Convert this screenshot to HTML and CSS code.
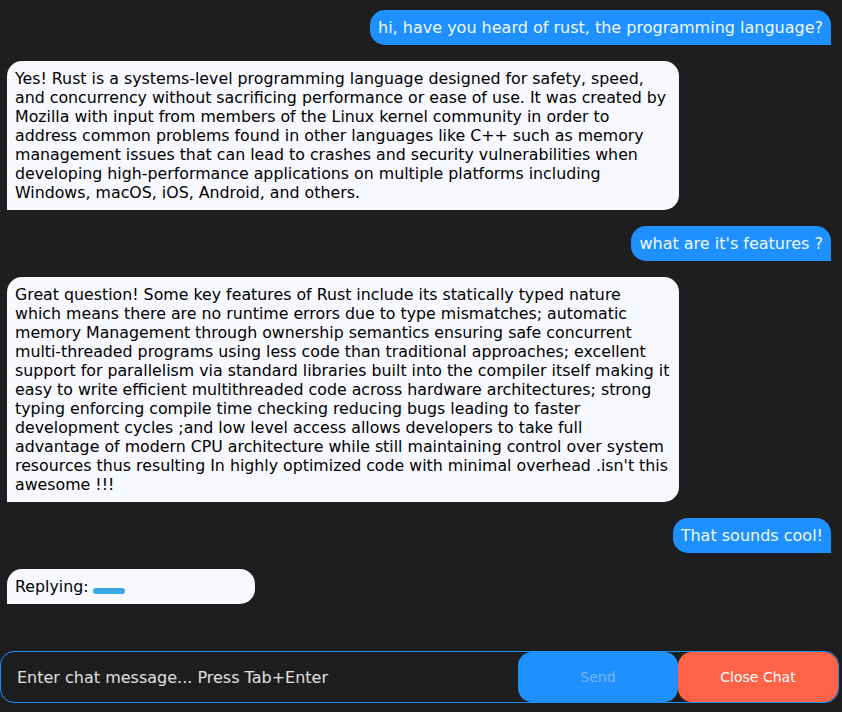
FILE: index.html
```html
<!DOCTYPE html>
<html lang="en">
<head>
  <meta charset="UTF-8">
  <meta name="viewport" content="width=device-width, initial-scale=1.0">
  <title>Chat</title>
  <link rel="stylesheet" href="styles.css">
</head>
<body>
  <div class="chat">
    <div class="message user">hi, have you heard of rust, the programming language?</div>
    <div class="message bot">Yes! Rust is a systems-level programming language designed for safety, speed, and concurrency without sacrificing performance or ease of use. It was created by Mozilla with input from members of the Linux kernel community in order to address common problems found in other languages like C++ such as memory management issues that can lead to crashes and security vulnerabilities when developing high-performance applications on multiple platforms including Windows, macOS, iOS, Android, and others.</div>
    <div class="message user">what are it's features ?</div>
    <div class="message bot">Great question! Some key features of Rust include its statically typed nature which means there are no runtime errors due to type mismatches; automatic memory Management through ownership semantics ensuring safe concurrent multi-threaded programs using less code than traditional approaches; excellent support for parallelism via standard libraries built into the compiler itself making it easy to write efficient multithreaded code across hardware architectures; strong typing enforcing compile time checking reducing bugs leading to faster development cycles ;and low level access allows developers to take full advantage of modern CPU architecture while still maintaining control over system resources thus resulting In highly optimized code with minimal overhead .isn't this awesome !!!</div>
    <div class="message user">That sounds cool!</div>
    <div class="message bot replying">Replying:<span class="loader"></span></div>
  </div>

  <form class="input-bar">
    <input type="text" class="chat-input" placeholder="Enter chat message... Press Tab+Enter">
    <button type="button" class="btn send" disabled>Send</button>
    <button type="button" class="btn close">Close Chat</button>
  </form>
</body>
</html>
```

FILE: styles.css
```css
body {
  margin: 0;
  padding: 0;
  background-color: #1e1e1e;
  font-family: "DejaVu Sans", sans-serif;
  height: 100vh;
  display: flex;
  flex-direction: column;
}

.chat {
  flex: 1;
  display: flex;
  flex-direction: column;
  gap: 16px;
  padding: 10px 11px 0 7px;
}

.message {
  font-size: 16px;
  line-height: 19px;
  padding: 8px;
  max-width: 656px;
}

.user {
  align-self: flex-end;
  background-color: #1e90ff;
  color: #f0f8ff;
  border-radius: 15px 15px 0 15px;
}

.bot {
  align-self: flex-start;
  font-size: 15.8px;
  background-color: #f8f8ff;
  color: #000;
  border-radius: 15px 15px 15px 0;
}

.replying {
  width: 232px;
}

.loader {
  display: inline-block;
  width: 32px;
  height: 6px;
  margin-left: 4px;
  border-radius: 3px;
  background-color: #3aa9e6;
  vertical-align: -2px;
}

.input-bar {
  display: flex;
  margin: 0 3px 9px 0;
  height: 50px;
  border: 1px solid #1e90ff;
  border-radius: 14px;
  overflow: hidden;
}

.chat-input {
  flex: 1;
  background: transparent;
  border: none;
  outline: none;
  padding: 0 16px;
  font-family: "DejaVu Sans", sans-serif;
  font-size: 16px;
  color: #e8e8e8;
}

.chat-input::placeholder {
  color: #e0e0e0;
}

.btn {
  width: 160px;
  border: none;
  border-radius: 14px;
  font-family: "DejaVu Sans", sans-serif;
  font-size: 14px;
  cursor: pointer;
}

.send {
  background-color: #1e90ff;
  color: #77b6f5;
}

.close {
  background-color: #ff6347;
  color: #fff;
}
```
